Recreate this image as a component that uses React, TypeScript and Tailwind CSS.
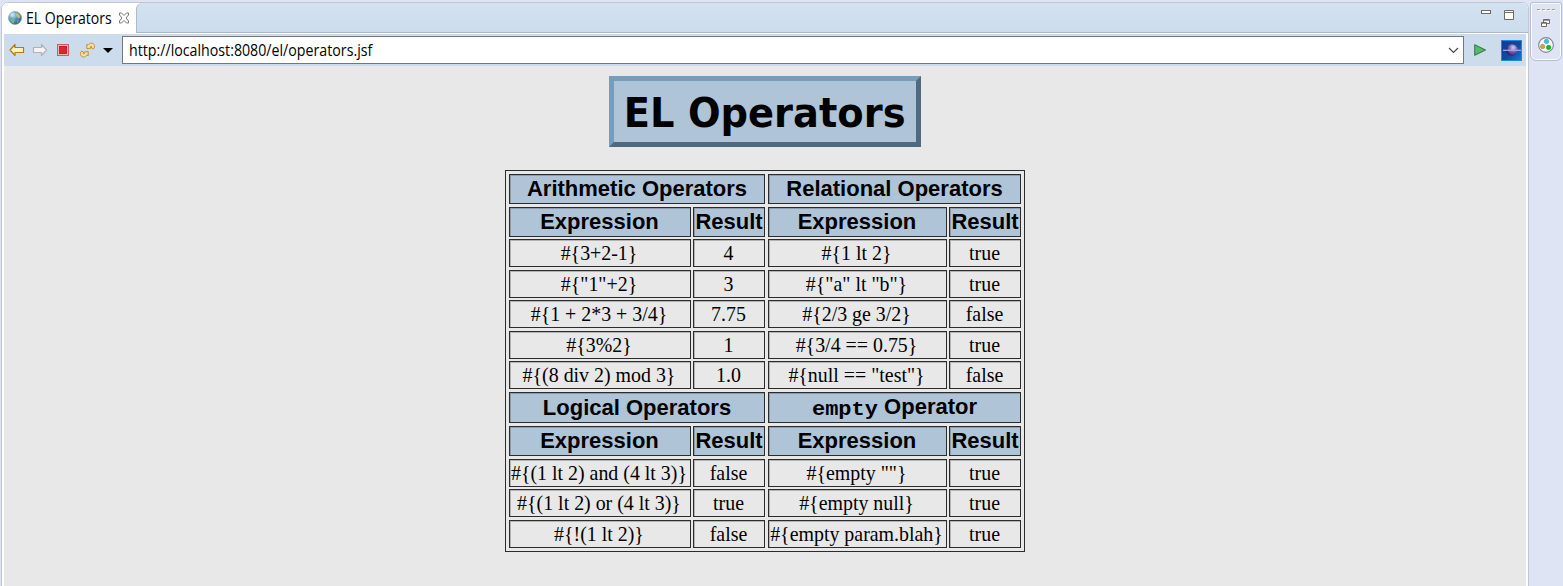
import React from "react";

type Row = {
  kind: "title" | "head" | "data";
  size: string;
  left: React.ReactNode[];
  right: React.ReactNode[];
};

const labels = ["Expression", "Result"];

const rows: Row[] = [
  { kind: "title", size: "h-[30px]", left: ["Arithmetic Operators"], right: ["Relational Operators"] },
  { kind: "head", size: "h-[30px] mt-[3px]", left: labels, right: labels },
  { kind: "data", size: "h-[28px] mt-[2px]", left: ["#{3+2-1}", "4"], right: ["#{1 lt 2}", "true"] },
  { kind: "data", size: "h-[28px] mt-[3px]", left: ['#{"1"+2}', "3"], right: ['#{"a" lt "b"}', "true"] },
  { kind: "data", size: "h-[28px] mt-[2px]", left: ["#{1 + 2*3 + 3/4}", "7.75"], right: ["#{2/3 ge 3/2}", "false"] },
  { kind: "data", size: "h-[28px] mt-[3px]", left: ["#{3%2}", "1"], right: ["#{3/4 == 0.75}", "true"] },
  { kind: "data", size: "h-[28px] mt-[2px]", left: ["#{(8 div 2) mod 3}", "1.0"], right: ['#{null == "test"}', "false"] },
  {
    kind: "title",
    size: "h-[31px] mt-[3px]",
    left: ["Logical Operators"],
    right: [
      <React.Fragment key="empty">
        <code className="inline-block origin-bottom scale-y-90 font-['Liberation_Mono',monospace] text-[22px]">empty</code> Operator
      </React.Fragment>,
    ],
  },
  { kind: "head", size: "h-[30px] mt-[3px]", left: labels, right: labels },
  { kind: "data", size: "h-[28px] mt-[3px]", left: ["#{(1 lt 2) and (4 lt 3)}", "false"], right: ['#{empty ""}', "true"] },
  { kind: "data", size: "h-[28px] mt-[2px]", left: ["#{(1 lt 2) or (4 lt 3)}", "true"], right: ["#{empty null}", "true"] },
  { kind: "data", size: "h-[28px] mt-[3px]", left: ["#{!(1 lt 2)}", "false"], right: ["#{empty param.blah}", "true"] },
];

function Cell({ kind, width, children }: { kind: Row["kind"]; width: string; children: React.ReactNode }) {
  const look =
    kind === "data"
      ? "font-['Liberation_Serif',serif] text-[19.9px] shadow-[inset_1px_1px_0_#b4b4b4]"
      : "pl-px bg-[#b0c4d8] font-['Liberation_Sans',sans-serif] text-[22px] font-bold shadow-[inset_1px_1px_0_#8c9cac]";
  return (
    <div className={`${width} ${look} flex h-full shrink-0 items-center justify-center border border-[#2c2c2c] leading-[26px] whitespace-nowrap`}>
      <span>{children}</span>
    </div>
  );
}

function Half({ row, cells, full, first }: { row: Row; cells: React.ReactNode[]; full: string; first: string }) {
  return (
    <div className="flex gap-[2px]">
      {cells.length === 1 ? (
        <Cell kind={row.kind} width={full}>{cells[0]}</Cell>
      ) : (
        <>
          <Cell kind={row.kind} width={`${first} pr-px`}>{cells[0]}</Cell>
          <Cell kind={row.kind} width="w-[72px]">{cells[1]}</Cell>
        </>
      )}
    </div>
  );
}

function Globe() {
  return (
    <svg width="14" height="14" viewBox="0 0 14 14">
      <defs>
        <radialGradient id="globe" cx="0.3" cy="0.25" r="0.85">
          <stop offset="0" stopColor="#d5eef8" />
          <stop offset="0.45" stopColor="#5a9cc5" />
          <stop offset="1" stopColor="#1c5796" />
        </radialGradient>
      </defs>
      <circle cx="7" cy="7" r="6.5" fill="url(#globe)" stroke="#7695aa" strokeWidth="0.6" />
      <path d="M8 1.500 11 3l1.500 3-1.500 1.500L9 6 7.500 4z" fill="#b9b878" />
      <path d="M2 5.500 5 7l2 2-1.500 3.500L3 11z" fill="#7cae91" />
      <path d="M9 9.500l2-1-.5 3-1.500.5z" fill="#739f75" />
    </svg>
  );
}

function CloseMark() {
  return (
    <svg width="12" height="12" viewBox="0 0 12 12" fill="#fff" stroke="#777" strokeWidth="1">
      <path d="M1.500 1h2L6 3.500 8.500 1h2v2L8 6l2.500 3v2h-2L6 8.500 3.500 11h-2V9L4 6 1.500 3z" />
    </svg>
  );
}

function Arrow({ forward }: { forward?: boolean }) {
  return (
    <svg width="16" height="14" viewBox="0 0 16 14" strokeLinejoin="round">
      {forward ? (
        <path d="M14.500 7 9.500 1.500V4.500H1.500V9.500H9.500V12.500z" fill="#f4f4f4" stroke="#b3b3b3" strokeWidth="1.200" />
      ) : (
        <path d="M1 7 6 1.500V4.500H14.500V9.500H6V12.500z" fill="#fff1bf" stroke="#b9780b" strokeWidth="1.200" />
      )}
    </svg>
  );
}

function Refresh() {
  return (
    <svg width="16" height="16" viewBox="0 0 16 16" fill="#fbe2a0" stroke="#c08424" strokeWidth="0.9" strokeLinejoin="round">
      <path d="M6.800 2.300 8 3.300C9.800 .8 12.300.6 13.800 2.300c1.300 1.500 1 3.600-.6 4.900L11.500 5.800c1-1.100.2-2.200-1.300-1L11.300 6 6.800 6.700z" />
      <path d="M8.200 13.900 7 12.900c-1.800 2.500-4.300 2.700-5.800 1C-.1 12.400.2 10.300 1.800 9L3.500 10.400c-1 1.100-.2 2.200 1.300 1L3.700 10.200 8.200 9.500z" />
    </svg>
  );
}

function EclipseLogo() {
  return (
    <svg width="21" height="21" viewBox="0 0 21 21">
      <defs>
        <linearGradient id="sky" x1="0" y1="0" x2="1" y2="1">
          <stop offset="0" stopColor="#0c3d94" />
          <stop offset="0.55" stopColor="#14489f" />
          <stop offset="1" stopColor="#147bd6" />
        </linearGradient>
        <radialGradient id="moon" cx="0.6" cy="0.3" r="0.7">
          <stop offset="0" stopColor="#d8cdef" />
          <stop offset="0.5" stopColor="#7863b2" />
          <stop offset="1" stopColor="#33206f" />
        </radialGradient>
      </defs>
      <rect x="0.500" y="0.500" width="20" height="20" fill="url(#sky)" stroke="#168cea" />
      <circle cx="11" cy="10" r="5.800" fill="url(#moon)" />
      <path d="M5.500 8a6 6 0 0 0 4 7.500A7 7 0 0 1 8 5z" fill="#251551" />
      <path d="M2 10.300H20" stroke="#a7a4e8" strokeWidth="1.300" />
    </svg>
  );
}

function SideBar() {
  return (
    <div className="w-[33px] shrink-0 pt-[2px] pl-[1px]">
      <div className="flex h-[59px] w-[32px] flex-col items-center rounded-b-[6px] rounded-t-[3px] border border-[#b9bdd2] bg-[#dfe4f4] shadow-[inset_0_0_0_1px_#fbfcff]">
        <svg className="mt-[6px]" width="18" height="3" viewBox="0 0 18 3">
          <path d="M0 .5h3M5 .5h3M10 .5h3M15 .5h3" stroke="#a9a38f" />
          <path d="M1 1.500h3M6 1.500h3M11 1.500h3M16 1.500h2" stroke="#fff" />
        </svg>
        <svg className="mt-[7px] ml-[-1px]" width="9" height="8" viewBox="0 0 9 8" stroke="#716b65" fill="#f7f7fa">
          <path d="M2.500.5h6v4h-6zM2.500 1.200h6" />
          <path d="M.5 3.500h5v4h-5zM.5 4.200h5" />
        </svg>
        <svg className="mt-[10px]" width="16" height="16" viewBox="0 0 16 16">
          <circle cx="8" cy="8" r="7.400" fill="#f5f8fa" stroke="#7c8a8e" strokeWidth="1.100" />
          <circle cx="8.500" cy="4.400" r="2.200" fill="#55b5e6" stroke="#3195ca" strokeWidth="0.600" />
          <circle cx="4.600" cy="9.500" r="2.200" fill="#cfa44c" stroke="#ae8029" strokeWidth="0.600" />
          <circle cx="10.600" cy="10.400" r="2.200" fill="#0cc40c" stroke="#079b10" strokeWidth="0.600" />
        </svg>
      </div>
    </div>
  );
}

export default function App() {
  return (
    <div className="flex h-[586px] w-[1563px] overflow-hidden bg-[#dfe4f4] text-black">
      <div className="h-[586px] w-[1529px] shrink-0 pt-[2px] pl-px">
        <div className="flex h-[590px] w-[1528px] flex-col rounded-t-[7px] border border-[#c3c6d0] bg-white">
          <div className="flex h-[30px] shrink-0 rounded-t-[6px] bg-white">
            <div className="flex w-[134px] shrink-0 items-center rounded-tl-[6px] bg-white pl-[6px]">
              <Globe />
              <span className="ml-[4px] w-[88px] origin-left scale-x-[0.925] scale-y-[1.04] font-['Open_Sans',sans-serif] text-[15.2px] leading-[20px] whitespace-nowrap">EL Operators</span>
              <span className="ml-[4px]"><CloseMark /></span>
            </div>
            <div className="flex flex-1 items-start justify-end rounded-tr-[6px] rounded-tl-[6px] border-b border-l border-[#adb7ce] bg-linear-to-b from-[#d3e2f0] to-[#cddcec]">
              <svg className="mt-[7px] mr-[13px]" width="10" height="4" viewBox="0 0 10 4">
                <rect x="0.500" y="0.500" width="9" height="3" fill="#fff" stroke="#716b65" />
              </svg>
              <svg className="mt-[7px] mr-[14px]" width="10" height="10" viewBox="0 0 10 10">
                <path d="M.5.5h9v9h-9zM.5 2.500h9" fill="#fff" stroke="#716b65" />
              </svg>
            </div>
          </div>
          <div className="mt-px mr-[2px] ml-[2px] flex h-[32px] shrink-0 items-center bg-[#cddcec]">
            <div className="flex w-[118px] shrink-0 items-center pl-[5px]">
              <Arrow />
              <span className="ml-[7px]"><Arrow forward /></span>
              <svg className="ml-[9px]" width="12" height="12" viewBox="0 0 12 12">
                <rect x="0.500" y="0.500" width="11" height="11" fill="#f4b1b6" stroke="#d65768" />
                <rect x="2.500" y="2.500" width="7" height="7" fill="#dc2435" stroke="#c9202f" />
              </svg>
              <span className="ml-[11px]"><Refresh /></span>
              <svg className="ml-[7px]" width="10" height="5" viewBox="0 0 10 5"><path d="M0 0h10L5 5z" /></svg>
            </div>
            <div className="flex h-[28px] w-[1342px] shrink-0 items-center justify-between border border-[#777] bg-white pr-[4px] pl-[6px]">
              <span className="mb-px origin-left scale-x-[0.935] scale-y-[1.04] font-['Open_Sans',sans-serif] text-[15.2px] leading-[20px] whitespace-nowrap">http://localhost:8080/el/operators.jsf</span>
              <svg width="11" height="7" viewBox="0 0 11 7" fill="none" stroke="#444" strokeWidth="1.100"><path d="M1 1l4.500 4.500L10 1" /></svg>
            </div>
            <svg className="ml-[10px]" width="12" height="12" viewBox="0 0 12 12">
              <path d="M.7.7v10.600L11.500 6z" fill="#5ab673" stroke="#318447" strokeWidth="1.100" strokeLinejoin="round" />
            </svg>
            <span className="ml-[15px]"><EclipseLogo /></span>
          </div>
          <main className="mr-[2px] ml-[2px] flex flex-1 flex-col items-center bg-[#e8e8e8] pt-[10px]">
            <h1 className="mr-px flex h-[71px] w-[312px] items-center justify-center border-[5px] border-t-[#779dbe] border-r-[#4f6980] border-b-[#4f6980] border-l-[#779dbe] bg-[#b0c4d8] pt-[3px] pl-px font-['DejaVu_Sans',sans-serif] text-[40px] leading-[58px] font-bold whitespace-nowrap">
              <span className="scale-x-[0.96]">EL Operators</span>
            </h1>
            <section className="mt-[23px] mr-px h-[382px] w-[520px] border border-[#2c2c2c] p-[3px]">
              {rows.map((row, i) => (
                <div key={i} className={`${row.size} flex gap-[3px]`}>
                  <Half row={row} cells={row.left} full="w-[256px]" first="w-[182px]" />
                  <Half row={row} cells={row.right} full="w-[253px]" first="w-[179px]" />
                </div>
              ))}
            </section>
          </main>
        </div>
      </div>
      <SideBar />
    </div>
  );
}
